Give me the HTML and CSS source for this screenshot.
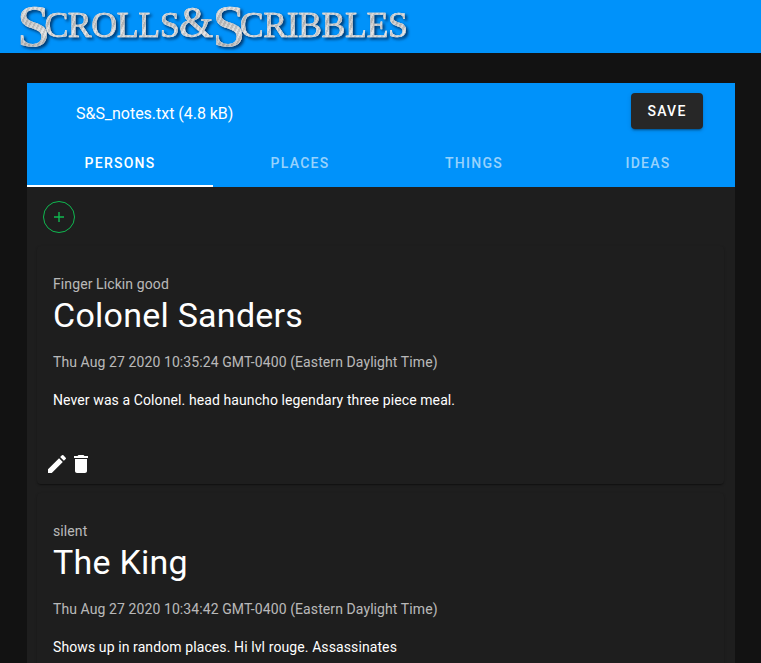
FILE: index.html
```html
<!DOCTYPE html>
<html lang="en">
<head>
<meta charset="utf-8">
<title>Scrolls &amp; Scribbles</title>
<link rel="stylesheet" href="styles.css">
</head>
<body>
<header class="topbar">
  <div class="logo"><span class="logo-big">S</span>CROLLS<span class="logo-amp">&amp;</span><span class="logo-big">S</span>CRIBBLES</div>
</header>
<main class="panel">
  <div class="panel-head">
    <div class="file-row">
      <span class="file-name">S&amp;S_notes.txt (4.8 kB)</span>
      <button class="save">SAVE</button>
    </div>
    <nav class="tabs">
      <div class="tab tab-first tab-active">PERSONS</div>
      <div class="tab">PLACES</div>
      <div class="tab">THINGS</div>
      <div class="tab">IDEAS</div>
    </nav>
  </div>
  <div class="panel-body">
    <div class="add-row">
      <button class="add" aria-label="Add">
        <svg viewBox="0 0 32 32" width="32" height="32"><circle cx="16" cy="16" r="15.5" fill="none" stroke="#10b850" stroke-width="1"/><path d="M16 11v10M11 16h10" stroke="#10b850" stroke-width="1.4" fill="none"/></svg>
      </button>
    </div>
    <article class="card">
      <div class="overline">Finger Lickin good</div>
      <h2 class="name">Colonel Sanders</h2>
      <div class="date">Thu Aug 27 2020 10:35:24 GMT-0400 (Eastern Daylight Time)</div>
      <p class="desc">Never was a Colonel. head hauncho legendary three piece meal.</p>
      <div class="actions">
        <svg class="icon" viewBox="0 0 24 24" width="24" height="24"><path d="M3 17.25V21h3.75L17.81 9.94l-3.75-3.75L3 17.25zM20.71 7.04a1 1 0 0 0 0-1.41l-2.34-2.34a1 1 0 0 0-1.41 0l-1.83 1.83 3.75 3.75 1.83-1.83z" fill="#fff"/></svg>
        <svg class="icon" viewBox="0 0 24 24" width="24" height="24"><path d="M6 19c0 1.1.9 2 2 2h8c1.1 0 2-.9 2-2V7H6v12zM19 4h-3.5l-1-1h-5l-1 1H5v2h14V4z" fill="#fff"/></svg>
      </div>
    </article>
    <article class="card">
      <div class="overline">silent</div>
      <h2 class="name">The King</h2>
      <div class="date">Thu Aug 27 2020 10:34:42 GMT-0400 (Eastern Daylight Time)</div>
      <p class="desc">Shows up in random places. Hi lvl rouge. Assassinates</p>
    </article>
  </div>
</main>
</body>
</html>
```
FILE: styles.css
```css
* { box-sizing: border-box; }
html, body { height: 100%; }
body {
  margin: 0;
  height: 663px;
  overflow: hidden;
  background: #121212;
  color: #fff;
  font-family: Roboto, "Liberation Sans", sans-serif;
}
.topbar {
  height: 53px;
  background: #0092fa;
  padding: 0 0 0 17px;
}
.logo {
  font-family: "Liberation Serif", serif;
  font-size: 36px;
  line-height: 50px;
  height: 50px;
  letter-spacing: -.55px;
  white-space: nowrap;
  display: inline-block;
  background:
    repeating-linear-gradient(115deg, rgba(255,255,255,.2) 0 1px, rgba(90,90,90,.18) 1px 3px, rgba(255,255,255,.1) 3px 4px),
    linear-gradient(180deg, #ececec 0%, #c4c4c4 45%, #e2e2e2 65%, #a8a8a8 100%);
  -webkit-background-clip: text;
  background-clip: text;
  color: transparent;
  -webkit-text-stroke: .5px rgba(225,225,225,.75);
  filter: drop-shadow(2px 2px 1.5px rgba(0, 30, 70, 0.8));
}
.logo-big {
  display: inline-block;
  font-size: 60px;
  line-height: 36px;
  letter-spacing: -6px;
  vertical-align: -9px;
}
.logo-amp { font-size: 44px; line-height: 36px; letter-spacing: -1px; }
.panel {
  margin: 30px 26px 0 27px;
  background: #1e1e1e;
}
.panel-head { background: #0092fa; }
.file-row {
  height: 56px;
  display: flex;
  align-items: center;
  justify-content: space-between;
  padding: 0 32px 0 49px;
}
.file-name { font-size: 16px; letter-spacing: -.03px; padding-top: 5px; }
.save {
  width: 72px;
  height: 36px;
  border: 0;
  border-radius: 4px;
  background: #272727;
  color: #fff;
  font: 500 14px Roboto, sans-serif;
  letter-spacing: 1.25px;
  box-shadow: 0 3px 1px -2px rgba(0,0,0,.2), 0 2px 2px rgba(0,0,0,.14), 0 1px 5px rgba(0,0,0,.12);
}
.tabs { display: flex; height: 48px; }
.tab {
  flex: 0 0 174px;
  display: flex;
  align-items: center;
  justify-content: center;
  font-size: 14px;
  font-weight: 500;
  letter-spacing: 1.25px;
  color: rgba(255,255,255,.6);
}
.tab-first { flex-basis: 186px; }
.tab-active { color: #fff; border-bottom: 2px solid #fff; padding-top: 2px; }
.panel-body { padding: 0 11px 0 10px; }
.add-row { height: 59px; padding: 14px 0 0 6px; }
.add { display: block; width: 32px; height: 32px; padding: 0; border: 0; background: none; }
.card {
  height: 238px;
  margin-bottom: 9px;
  padding: 28px 16px 0;
  border-radius: 4px;
  background: #1e1e1e;
  box-shadow: 0 2px 1px -1px rgba(0,0,0,.2), 0 1px 1px rgba(0,0,0,.14), 0 1px 3px rgba(0,0,0,.12);
  position: relative;
}
.overline { font-size: 14px; line-height: 20px; letter-spacing: .1px; color: rgba(255,255,255,.7); }
.name { margin: 0; font-size: 34px; font-weight: 400; line-height: 42px; letter-spacing: .25px; }
.date { margin-top: 16px; font-size: 14px; line-height: 20px; letter-spacing: .09px; color: rgba(255,255,255,.7); }
.desc { margin: 18px 0 0; font-size: 14px; line-height: 20px; letter-spacing: .1px; color: #fff; }
.actions {
  display: flex;
  position: absolute;
  left: 8px;
  bottom: 8px;
}
.icon { display: block; }
```
